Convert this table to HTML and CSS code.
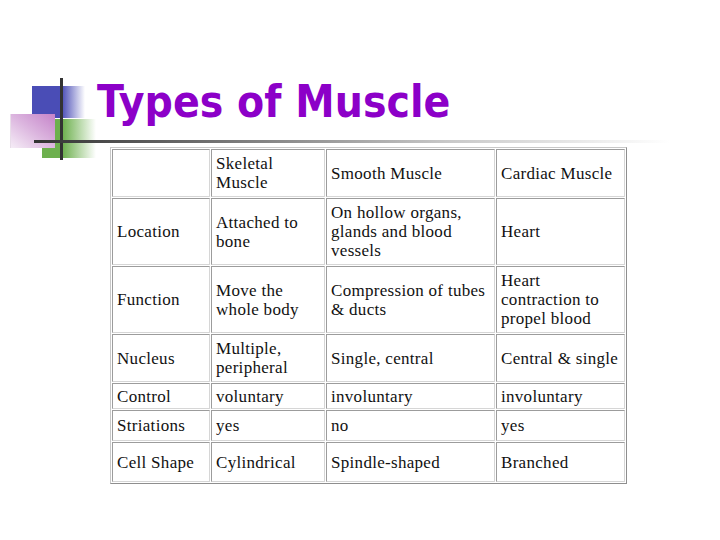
FILE: index.html
```html
<!DOCTYPE html>
<html>
<head>
<meta charset="utf-8">
<title>Types of Muscle</title>
<link rel="stylesheet" href="styles.css">
</head>
<body>
<div class="slide">
  <div class="logo" aria-hidden="true">
    <div class="sq sq-blue"></div>
    <div class="sq sq-green"></div>
    <div class="sq sq-pink"></div>
    <div class="vline"></div>
  </div>
  <div class="hline" aria-hidden="true"></div>
  <h1 class="title">Types of Muscle</h1>
  <table class="muscle">
    <tr class="r1">
      <td class="c1"></td>
      <td class="c2">Skeletal<br>Muscle</td>
      <td class="c3">Smooth Muscle</td>
      <td class="c4">Cardiac Muscle</td>
    </tr>
    <tr class="r2">
      <td class="c1">Location</td>
      <td class="c2">Attached to<br>bone</td>
      <td class="c3">On hollow organs,<br>glands and blood<br>vessels</td>
      <td class="c4">Heart</td>
    </tr>
    <tr class="r3">
      <td class="c1">Function</td>
      <td class="c2">Move the<br>whole body</td>
      <td class="c3">Compression of tubes<br>&amp; ducts</td>
      <td class="c4">Heart<br>contraction to<br>propel blood</td>
    </tr>
    <tr class="r4">
      <td class="c1">Nucleus</td>
      <td class="c2">Multiple,<br>peripheral</td>
      <td class="c3">Single, central</td>
      <td class="c4">Central &amp; single</td>
    </tr>
    <tr class="r5">
      <td class="c1">Control</td>
      <td class="c2">voluntary</td>
      <td class="c3">involuntary</td>
      <td class="c4">involuntary</td>
    </tr>
    <tr class="r6">
      <td class="c1">Striations</td>
      <td class="c2">yes</td>
      <td class="c3">no</td>
      <td class="c4">yes</td>
    </tr>
    <tr class="r7">
      <td class="c1">Cell Shape</td>
      <td class="c2">Cylindrical</td>
      <td class="c3">Spindle-shaped</td>
      <td class="c4">Branched</td>
    </tr>
  </table>
</div>
</body>
</html>
```

FILE: styles.css
```css
html, body {
  margin: 0;
  padding: 0;
  background: #ffffff;
}

.slide {
  position: relative;
  width: 720px;
  height: 540px;
  overflow: hidden;
  padding-top: 77px;
  box-sizing: border-box;
}

/* decorative logo */
.logo {
  position: absolute;
  left: 0;
  top: 0;
  width: 100px;
  height: 170px;
}

.sq {
  position: absolute;
}

.sq-blue {
  left: 32px;
  top: 86px;
  width: 53px;
  height: 32px;
  background: linear-gradient(to right, #4a4db6 0%, #4a4db6 56%, #ffffff 100%);
}

.sq-green {
  left: 42px;
  top: 119px;
  width: 54px;
  height: 39px;
  background: linear-gradient(to right, #6db04e 0%, #6db04e 38%, #ffffff 100%);
}

.sq-pink {
  left: 10px;
  top: 114px;
  width: 45px;
  height: 34px;
  background: linear-gradient(to bottom left, #c583c9 0%, #dcb6df 50%, #f6eef7 100%);
  box-shadow: inset 1px 0 0 #e8dde9;
}

.vline {
  position: absolute;
  left: 60px;
  top: 78px;
  width: 3px;
  height: 82px;
  background: #333333;
}

.hline {
  position: absolute;
  left: 34px;
  top: 140px;
  width: 636px;
  height: 3px;
  background: linear-gradient(to right, #333333 0%, #6a6a6a 25%, #c8c8c8 65%, #ffffff 100%);
}

.title {
  position: relative;
  margin: 0 0 0 97px;
  font-family: "DejaVu Sans Condensed", "DejaVu Sans", sans-serif;
  font-weight: bold;
  font-stretch: condensed;
  font-size: 44px;
  line-height: 50px;
  color: #8c00c8;
}

/* table */
.muscle {
  position: relative;
  margin: 20px 0 0 110px;
  border-collapse: separate;
  border-spacing: 1px;
  border: 1px solid;
  border-color: #c8c8c8 #8e8e8e #8e8e8e #c8c8c8;
  font-family: "Liberation Serif", "Times New Roman", serif;
  font-size: 17px;
  letter-spacing: 0.3px;
  line-height: 19px;
  color: #111111;
  background: #ffffff;
}

.muscle td {
  border: 1px solid;
  border-color: #9c9c9c #d6d6d6 #d6d6d6 #9c9c9c;
  padding: 0 4px;
  vertical-align: middle;
  white-space: nowrap;
  box-sizing: border-box;
}

.c1 { width: 98px; }
.c2 { width: 114px; }
.c3 { width: 169px; }
.c4 { width: 129px; }

.r1 td { height: 48px; }
.r2 td { height: 67px; }
.r3 td { height: 67px; }
.r4 td { height: 48px; }
.r5 td { height: 26px; }
.r6 td { height: 31px; }
.r7 td { height: 40px; }
```
